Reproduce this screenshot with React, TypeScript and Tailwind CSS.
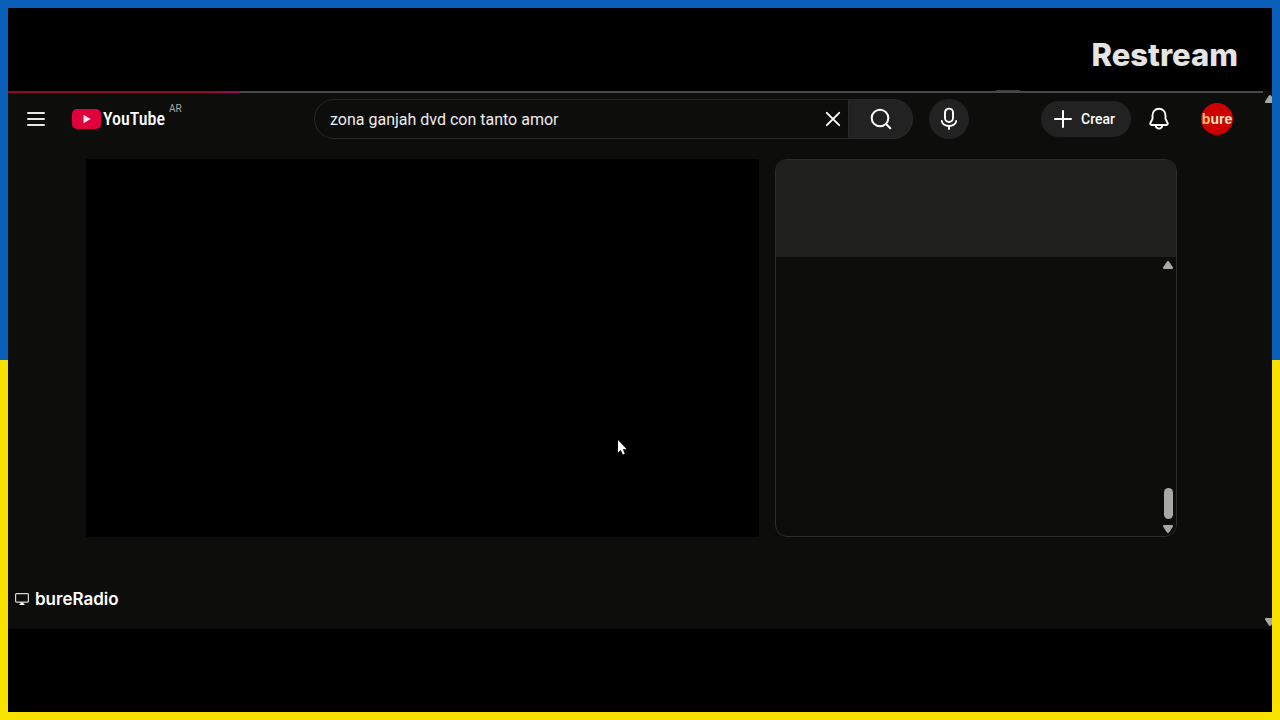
import React from 'react';

const TriangleUp: React.FC<{ className?: string }> = ({ className }) => (
  <svg viewBox="0 0 10 8" className={className} fill="#a8a8a8" aria-hidden="true">
    <path d="M3.600 1Q5-.8 6.400 1L9.800 6.200Q10.400 8 9 8H1Q-.4 8 .2 6.200Z" />
  </svg>
);

const TriangleDown: React.FC<{ className?: string }> = ({ className }) => (
  <svg viewBox="0 0 10 8" className={className} fill="#a8a8a8" aria-hidden="true">
    <path d="M3.600 7Q5 8.800 6.400 7L9.800 1.800Q10.400 0 9 0H1Q-.4 0 .2 1.800Z" />
  </svg>
);

const Logo = () => (
  <a href="#" aria-label="YouTube" className="flex items-center gap-0.5 text-white">
    <svg viewBox="0 0 29 20" className="h-5 w-[29px]" aria-hidden="true">
      <rect width="29" height="20" rx="5" fill="#e0003c" />
      <path d="M11.500 5.800v8.400l7.200-4.200z" fill="#ffe4ee" />
    </svg>
    <span className="font-['Roboto_Condensed','Open_Sans_Condensed',Roboto,sans-serif] text-lg leading-6 font-medium">YouTube</span>
  </a>
);

const SearchBar = () => (
  <form className="flex h-10 w-[599px] items-stretch" onSubmit={(e) => e.preventDefault()}>
    <div className="flex flex-1 items-center rounded-l-full border border-[#282828] pl-[15px]">
      <input
        type="text"
        aria-label="Buscar"
        defaultValue="zona ganjah dvd con tanto amor"
        className="min-w-0 flex-1 bg-transparent pt-0.5 text-base text-[#eeeeee] outline-none"
      />
      <button type="button" aria-label="Borrar" className="px-[3px]">
        <svg viewBox="0 0 24 24" className="size-6" fill="none" stroke="#fff" strokeWidth="1.900" strokeLinecap="round">
          <path d="M5.800 5.800l12.400 12.400M18.200 5.800l-12.400 12.400" />
        </svg>
      </button>
    </div>
    <button type="submit" aria-label="Buscar" className="flex w-16 items-center justify-center rounded-r-full border border-l-0 border-[#292929] bg-[#222222]">
      <svg viewBox="0 0 24 24" className="size-6" fill="none" stroke="#fff" strokeWidth="2" strokeLinecap="round">
        <circle cx="11" cy="11" r="8.300" />
        <path d="M17 17l4.300 4.300" />
      </svg>
    </button>
  </form>
);

const Header = () => (
  <header className="flex h-[52px] items-center justify-between pr-[39px] pl-4">
    <div className="flex w-[218px] items-center gap-6">
      <button type="button" aria-label="Menú">
        <svg viewBox="0 0 24 24" className="size-6" stroke="#e6e6e6" strokeWidth="2" strokeLinecap="round">
          <path d="M4 6h16M4 12h16M4 18h16" />
        </svg>
      </button>
      <div className="flex items-start gap-1">
        <Logo />
        <span className="-mt-1 text-[10px] leading-3 text-[#aaaaaa]">AR</span>
      </div>
    </div>

    <div className="flex items-center gap-4">
      <SearchBar />
      <button type="button" aria-label="Buscar por voz" className="flex size-10 items-center justify-center rounded-full bg-[#222222]">
        <svg viewBox="0 0 24 24" className="size-6" fill="none" stroke="#fff" strokeWidth="1.900" strokeLinecap="round">
          <rect x="8" y="1.600" width="8" height="13.400" rx="4" />
          <path d="M4.800 14a7.200 5 0 0 0 14.400 0M12 19v3" />
        </svg>
      </button>
    </div>

    <div className="flex items-center">
      <button type="button" className="flex h-9 items-center gap-1.5 rounded-full bg-[#222222] pr-4 pl-2.5 text-sm font-medium text-white">
        <svg viewBox="0 0 24 24" className="size-6" stroke="#fff" strokeWidth="2" strokeLinecap="round" aria-hidden="true">
          <path d="M12 4v16M4 12h16" />
        </svg>
        Crear
      </button>
      <button type="button" aria-label="Notificaciones" className="ml-4">
        <svg viewBox="0 0 24 24" className="size-6" fill="none" stroke="#fff" strokeWidth="1.900" strokeLinejoin="round">
          <path d="M12 1.800c-3.800 0-6.500 2.900-6.500 6.600v3.400l-2.100 4.200c-.5 1 .1 2 1.100 2h15c1 0 1.600-1 1.100-2l-2.100-4.200V8.400c0-3.700-2.700-6.600-6.500-6.600z" />
          <path d="M8.700 18.300a3.300 3.300 0 0 0 6.600 0" />
        </svg>
      </button>
      <button type="button" aria-label="Cuenta" className="ml-[30px] flex size-8 items-center justify-center rounded-full bg-[#cc0000] font-['Liberation_Sans',sans-serif] text-sm leading-4 font-bold text-[#ffe9c4]">
        <span><span className="text-[#ffc861]">b</span>ure</span>
      </button>
    </div>
  </header>
);

const ChatPanel = () => (
  <aside className="flex w-[402px] flex-col overflow-hidden rounded-xl border border-[#2d2d2c]">
    <div className="h-[97px] bg-[#1f1f1e]" />
    <div className="flex flex-1 flex-col items-end px-[3px] pt-1 pb-[3px]">
      <TriangleUp className="h-2 w-2.5" />
      <div className="mt-auto mb-1.5 h-[31px] w-[9px] rounded-full bg-[#a8a8a8]" />
      <TriangleDown className="h-2 w-2.5" />
    </div>
  </aside>
);

const App: React.FC = () => {
  return (
    <div className="min-h-screen bg-linear-to-b from-[#0a5fb8] from-50% to-[#f7e200] to-50% p-2 font-[Roboto,sans-serif]">
      <div className="flex min-h-[calc(100vh-16px)] flex-col bg-black">
        <div className="flex h-[83px] items-center justify-end pt-2.5 pr-[34px]">
          <span className="font-[Inter,sans-serif] text-[31px] leading-9 font-extrabold text-[#e4e4e2]">Restream</span>
        </div>

        <div className="relative bg-[#0d0d0c]">
          {/* Bottom edge of the floating pill above the page */}
          <div className="absolute bottom-full left-[988px] h-px w-6 rounded-full bg-[#3a3a3a]" />

          {/* Page loading bar */}
          <div className="mr-[9px] h-0.5 bg-[#484848]">
            <div className="h-full w-[232px] bg-linear-to-r from-[#8c0a28] from-85% to-[#a00068]" />
          </div>

          <Header />

          <main className="flex gap-4 pt-3.5 pr-[95px] pl-[78px]">
            <div className="aspect-[673/378] flex-1 bg-black" />
            <ChatPanel />
          </main>

          <div className="flex items-center gap-1.5 px-[7px] pt-[52px] pb-5 font-[Inter,sans-serif] text-[17px] leading-5 font-semibold text-white">
            <svg viewBox="0 0 14 12" className="h-3 w-3.5" fill="none" stroke="#d8d8d8" aria-hidden="true">
              <rect x=".6" y=".6" width="12.800" height="8.600" rx="1" strokeWidth="1.200" />
              <path d="M5.500 9.500h3v1.200h1v1.300H4.500v-1.300h1z" fill="#fff" stroke="none" />
            </svg>
            bureRadio
          </div>

          <div className="pointer-events-none absolute inset-y-0 right-0 flex w-[7px] flex-col justify-between overflow-hidden pt-1 pb-[3px]">
            <TriangleUp className="h-2 w-2.5 shrink-0" />
            <TriangleDown className="h-2 w-2.5 shrink-0" />
          </div>
        </div>
      </div>

      {/* Mouse pointer */}
      <svg viewBox="0 0 12 17" className="absolute top-[439px] left-[617px] h-[17px] w-3" aria-hidden="true">
        <path d="M1 1v12.500l2.800-2.500 2 4.600 2-.9-2-4.500h3.900z" fill="#fff" />
      </svg>
    </div>
  );
};

export default App;
